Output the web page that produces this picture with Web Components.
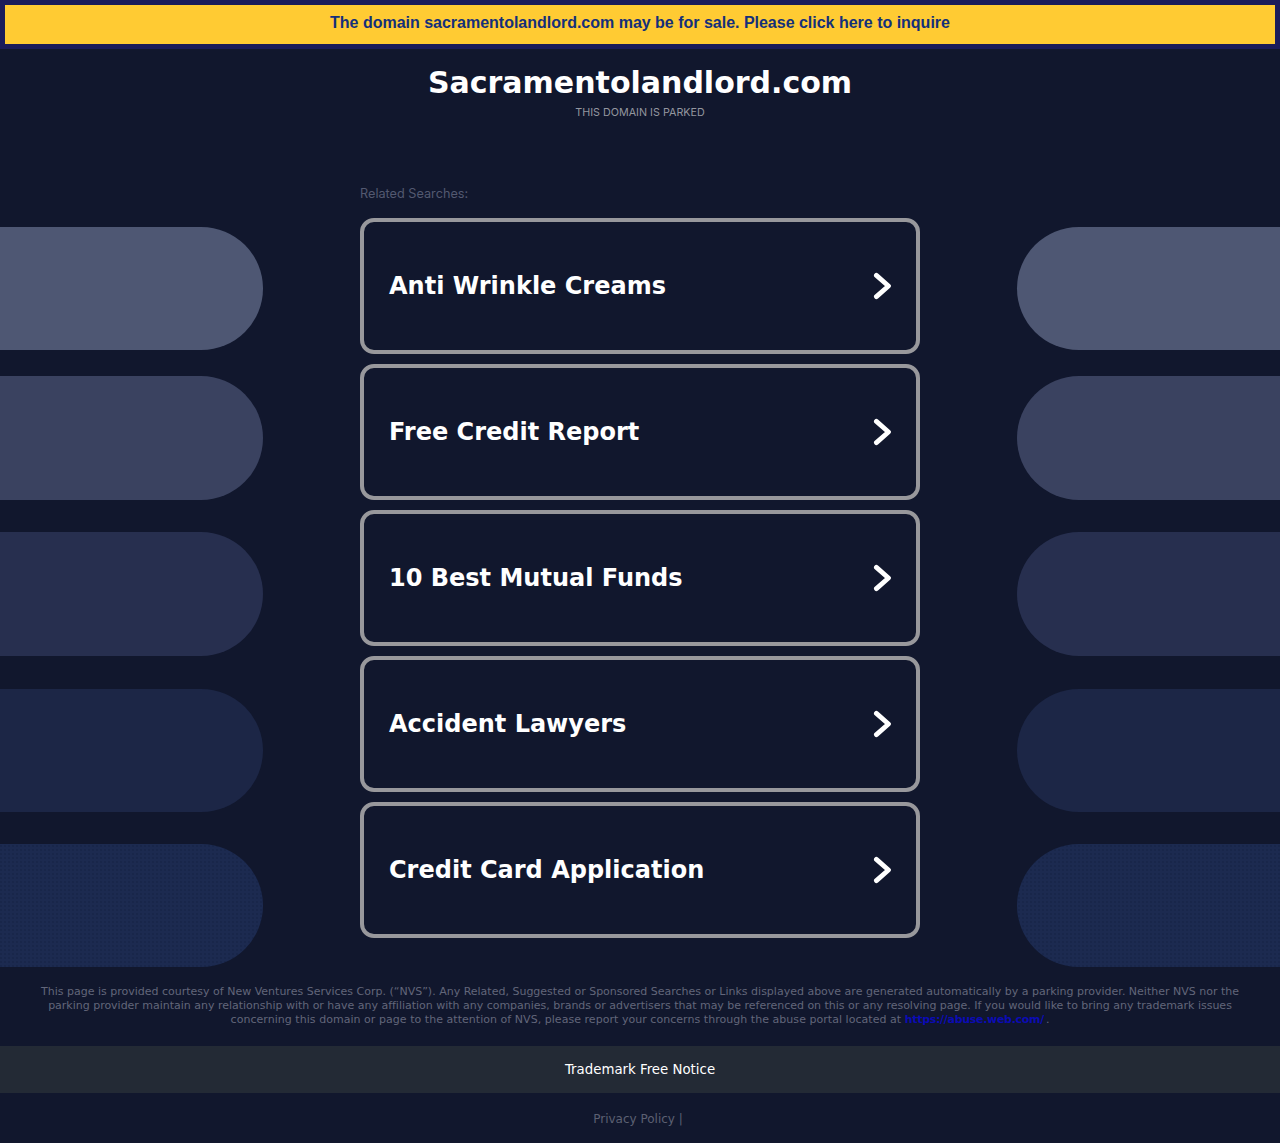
<!DOCTYPE html>
<html lang="en"><head><meta charset="utf-8"><title>Sacramentolandlord.com</title>
<style>
html,body{margin:0;padding:0;background:#11172d}
body{font-family:"DejaVu Sans",sans-serif;width:1280px;height:1143px;overflow:hidden}
</style></head><body>
<parked-page></parked-page>
<template id="t-banner"><style>
:host{display:block;box-sizing:border-box;height:49px;border:5px solid #1b1c5a;background:#ffcb33;text-align:center;font:bold 16px/36px "Liberation Sans",sans-serif;color:#14307a;letter-spacing:-.01px}
</style><slot></slot></template>
<template id="t-header"><style>
:host{display:block;text-align:center;padding-top:15px;height:125px;box-sizing:border-box}
h1{margin:0;font:bold 30px/38px "DejaVu Sans",sans-serif;color:#fff}
p{margin:4px 0 0;font:10.75px/14px "Inter",sans-serif;color:#93969f}
</style><h1><slot name="title"></slot></h1><p><slot name="sub"></slot></p></template>
<template id="t-card"><style>
:host{display:flex;align-items:center;justify-content:space-between;box-sizing:border-box;height:136px;border:4px solid #98989c;border-radius:14px;padding:0 25px;background:#11172d;color:#fff;font:bold 24px/32px "DejaVu Sans",sans-serif}
svg{width:22px;height:30px;flex:none}
</style><slot></slot><svg viewBox="0 0 22 30" aria-hidden="true"><path d="M7.400 4.400 L19.500 15 L7.400 25.600" fill="none" stroke="#fff" stroke-width="4.800" stroke-linecap="round" stroke-linejoin="round"/></svg></template>
<template id="t-pill"><style>
:host{position:absolute;display:block;width:400px;height:123.5px;background:var(--c)}
:host([side=l]){left:-137.5px;border-radius:0 62px 62px 0}
:host([side=r]){left:1017px;border-radius:62px 0 0 62px}
:host([dots]){background-image:radial-gradient(rgba(12,20,50,.2) .8px,transparent 1px);background-size:4px 4px}
</style></template>
<template id="t-legal"><style>
:host{display:block;padding:17px 30px 0;height:78px;box-sizing:border-box;text-align:center;font:11px/14px "DejaVu Sans",sans-serif;color:#62667a}
</style><slot></slot></template>
<template id="t-notice"><style>
:host{display:block;height:47px;background:#232a35;text-align:center;color:#fff;font:13.33px/47px "DejaVu Sans",sans-serif}
</style><slot></slot></template>
<template id="t-priv"><style>
:host{display:block;text-align:center;color:#5c6072;padding:18px 4px 0 0;font:12px/16px "DejaVu Sans",sans-serif}
</style><slot></slot></template>
<template id="t-page"><style>
:host{display:block;position:relative;width:1280px;height:1143px;overflow:hidden;color:#fff}
main{position:relative;width:560px;margin:0 auto}
.lbl{font:12.7px/16px "Inter",sans-serif;color:#535970;height:44px;padding-top:12px;box-sizing:border-box}
.list{display:flex;flex-direction:column;gap:10px}
.sp{height:30px}
.l2{letter-spacing:-.015px}
.l3{letter-spacing:.04px}
.l3 a{color:#0b0bb4;font-weight:bold;letter-spacing:-.3px;text-decoration:none}
.l3 span{margin-left:2px}
</style>
<park-pill side="l" style="top:226.5px;--c:#4e5773"></park-pill><park-pill side="r" style="top:226.5px;--c:#4e5773"></park-pill>
<park-pill side="l" style="top:376px;--c:#3a4260"></park-pill><park-pill side="r" style="top:376px;--c:#3a4260"></park-pill>
<park-pill side="l" style="top:532px;--c:#272f4f"></park-pill><park-pill side="r" style="top:532px;--c:#272f4f"></park-pill>
<park-pill side="l" style="top:688.5px;--c:#1c2646"></park-pill><park-pill side="r" style="top:688.5px;--c:#1c2646"></park-pill>
<park-pill side="l" dots style="top:843.5px;--c:#1c2a50"></park-pill><park-pill side="r" dots style="top:843.5px;--c:#1c2a50"></park-pill>
<park-banner>The domain sacramentolandlord.com may be for sale. Please click here to inquire</park-banner>
<park-header><span slot="title">Sacramentolandlord.com</span><span slot="sub">THIS DOMAIN IS PARKED</span></park-header>
<main><div class="lbl">Related Searches:</div>
<div class="list">
<park-card>Anti Wrinkle Creams</park-card>
<park-card>Free Credit Report</park-card>
<park-card>10 Best Mutual Funds</park-card>
<park-card>Accident Lawyers</park-card>
<park-card>Credit Card Application</park-card>
</div></main>
<div class="sp"></div>
<park-legal><div>This page is provided courtesy of New Ventures Services Corp. (“NVS”). Any Related, Suggested or Sponsored Searches or Links displayed above are generated automatically by a parking provider. Neither NVS nor the</div><div class="l2">parking provider maintain any relationship with or have any affiliation with any companies, brands or advertisers that may be referenced on this or any resolving page. If you would like to bring any trademark issues</div><div class="l3">concerning this domain or page to the attention of NVS, please report your concerns through the abuse portal located at <a href="#">https://abuse.web.com/</a><span>.</span></div></park-legal>
<park-notice>Trademark Free Notice</park-notice>
<park-priv>Privacy Policy |</park-priv>
</template>
<script>
const reg=(n,t)=>customElements.define(n,class extends HTMLElement{constructor(){super();this.attachShadow({mode:'open'}).appendChild(document.getElementById(t).content.cloneNode(true))}});
[['park-banner','t-banner'],['park-header','t-header'],['park-card','t-card'],['park-pill','t-pill'],['park-legal','t-legal'],['park-notice','t-notice'],['park-priv','t-priv'],['parked-page','t-page']].forEach(a=>reg(a[0],a[1]));
</script>
</body></html>
